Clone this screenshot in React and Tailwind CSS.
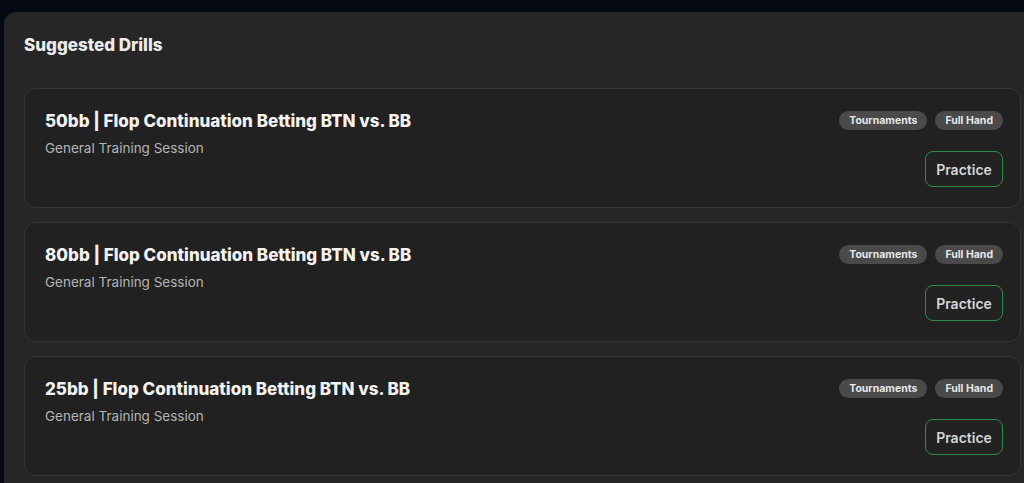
export default function App() {
  const drills = [
    "50bb | Flop Continuation Betting BTN vs. BB",
    "80bb | Flop Continuation Betting BTN vs. BB",
    "25bb | Flop Continuation Betting BTN vs. BB",
  ];
  return (
    <div className="h-[483px] w-[1024px] overflow-hidden bg-[#050a12] pl-1 pt-3" style={{ fontFamily: "Inter, 'Noto Sans', sans-serif" }}>
      <div className="h-full rounded-tl-xl bg-[#262626] pl-5 pr-[3px] pt-5">
        <h2 className="mt-px text-[17px] font-extrabold leading-6 text-[#ececec]">Suggested Drills</h2>
        <div className="mt-[31px] flex flex-col gap-[14px]">
          {drills.map((t) => (
            <div key={t} className="flex h-[120px] items-start justify-between rounded-xl border border-[#343434] bg-[#212121] pl-5 pr-[17px] pt-5">
              <div>
                <div className="text-[17px] font-extrabold leading-6 text-[#f2f2f2]">{t}</div>
                <div className="mt-[5px] text-[13.5px] leading-5 text-[#b4b4b4]">General Training Session</div>
              </div>
              <div className="mt-[2px] flex flex-col items-end">
                <div className="flex gap-2">
                  <span className="flex h-[19px] items-center rounded-full bg-[#4a4a4a] px-[10px] text-[10.5px] font-bold text-[#e6e6e6]">Tournaments</span>
                  <span className="flex h-[19px] items-center rounded-full bg-[#4a4a4a] px-[10px] text-[10.5px] font-bold text-[#e6e6e6]">Full Hand</span>
                </div>
                <button className="mt-[21px] flex h-9 w-[78px] items-center justify-center rounded-lg border-[1.5px] border-[#2f8a4c] bg-[#222222] text-[14px] font-semibold text-[#d6d6d6]">Practice</button>
              </div>
            </div>
          ))}
        </div>
      </div>
    </div>
  );
}
